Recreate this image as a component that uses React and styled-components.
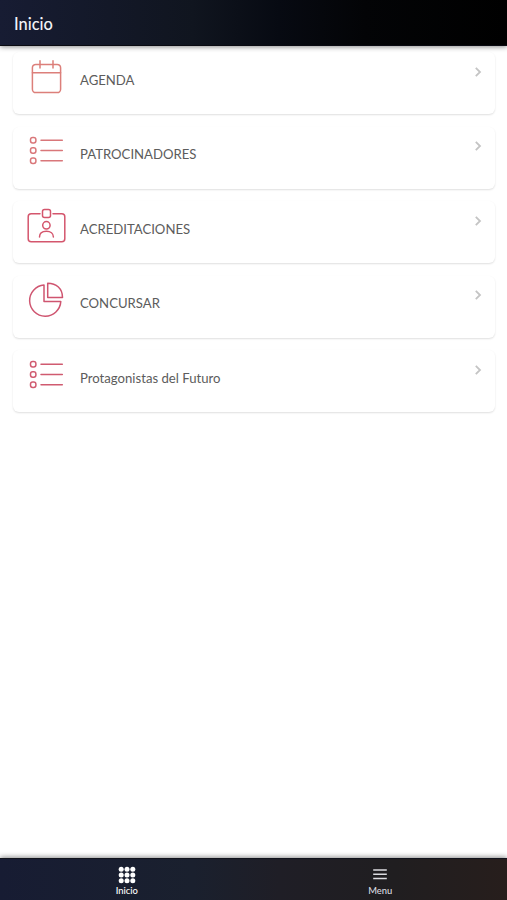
import React from 'react';
import styled, { createGlobalStyle } from 'styled-components';

const GlobalStyle = createGlobalStyle`
  * {
    box-sizing: border-box;
  }

  body {
    margin: 0;
    background: #fff;
    font-family: Lato, 'Liberation Sans', sans-serif;
  }
`;

const Page = styled.div`
  height: 900px;
  display: flex;
  flex-direction: column;
  overflow: hidden;
`;

const Header = styled.header`
  height: 46px;
  flex: none;
  display: flex;
  align-items: center;
  padding: 2px 14px 0;
  background: linear-gradient(90deg, #171c33 0%, #10151f 38%, #070a12 55%, #030406 72%, #000 100%);
  border-bottom: 1px solid #0a0b12;
  box-shadow: 0 1px 5px rgba(0, 0, 0, 0.45);
  z-index: 1;
`;

const Title = styled.h1`
  margin: 0;
  color: #f2f3f7;
  font-size: 16.4px;
  font-weight: 500;
  line-height: 20px;
`;

const Content = styled.main`
  flex: 1;
  display: flex;
  flex-direction: column;
  gap: 12.5px;
  padding: 6px 12px 0 13px;
`;

const Card = styled.button`
  height: 62px;
  flex: none;
  display: flex;
  align-items: flex-start;
  padding: 4.5px 10px 0 13px;
  border: none;
  border-radius: 6px;
  background: #fff;
  box-shadow: 0 1px 2px rgba(0, 0, 0, 0.13);
  font-family: inherit;
  text-align: left;
  cursor: pointer;
`;

const IconBox = styled.svg`
  width: 40px;
  height: 40px;
  flex: none;
  fill: none;
  stroke: ${props => props.$color};
  stroke-width: 1.5;
  stroke-linecap: round;
  stroke-linejoin: round;
`;

const Label = styled.span`
  flex: 1;
  padding: 13px 0 0 14px;
  color: #5c5c5c;
  font-size: 13.15px;
  line-height: 20px;
`;

const Chevron = styled.svg`
  width: 14px;
  height: 14px;
  margin-top: 8px;
  fill: none;
  stroke: #c4c4c4;
  stroke-width: 1.8;
`;

const TabBar = styled.nav`
  height: 42px;
  flex: none;
  display: flex;
  background: linear-gradient(90deg, #171c33 0%, #1a202e 38%, #1f1e26 55%, #201e20 78%, #271e1c 100%);
  border-top: 1px solid #11131c;
  box-shadow: 0 -1px 5px rgba(0, 0, 0, 0.45);
`;

const Tab = styled.button`
  flex: 1;
  display: flex;
  flex-direction: column;
  align-items: center;
  padding: 7px 0 0;
  border: none;
  background: none;
  color: ${props => (props.$active ? '#fff' : '#dcdce0')};
  font-family: inherit;
  font-size: 9.4px;
  font-weight: 500;
  line-height: 12px;
  cursor: pointer;

  svg {
    width: 18px;
    height: 18px;
    margin-bottom: 1px;
  }
`;

const CalendarIcon = () => (
  <>
    <rect x="6.4" y="7.4" width="28.2" height="28.2" rx="3.4" />
    <path d="M6.4 15.7h28.2M14 3.8v7.2M27 3.8v7.2" />
  </>
);

const ListIcon = () => (
  <>
    {[9.2, 19.5, 29.8].map(y => (
      <g key={y}>
        <rect x="4.5" y={y - 2.7} width="5.4" height="5.4" rx="2.2" />
        <path d={`M15 ${y}h21.3`} />
      </g>
    ))}
  </>
);

const BadgeIcon = () => (
  <>
    <path d="M14 7.7H5.2a3 3 0 0 0-3 3v22a3 3 0 0 0 3 3h30.6a3 3 0 0 0 3-3v-22a3 3 0 0 0-3-3H27" />
    <rect x="16.5" y="3.6" width="8" height="7.8" rx="2" />
    <circle cx="20.4" cy="19.3" r="3.7" />
    <path d="M13.5 31c0-3.6 2.8-5.8 6.9-5.8s7 2.2 7 5.8" />
  </>
);

const PieIcon = () => (
  <>
    <path d="M18 5a15.6 15.6 0 1 0 16.8 16.4H18z" />
    <path d="M21.7 3.2v14.2h14.8C36.5 8.6 30.4 3.2 21.7 3.2z" />
  </>
);

const items = [
  { label: 'AGENDA', icon: CalendarIcon, color: '#dc7f7a' },
  { label: 'PATROCINADORES', icon: ListIcon, color: '#d9777a' },
  { label: 'ACREDITACIONES', icon: BadgeIcon, color: '#d4566d' },
  { label: 'CONCURSAR', icon: PieIcon, color: '#cf5570' },
  { label: 'Protagonistas del Futuro', icon: ListIcon, color: '#d05b70' },
];

const App = () => (
  <>
    <GlobalStyle />
    <Page>
      <Header>
        <Title>Inicio</Title>
      </Header>

      <Content>
        {items.map(({ label, icon: Icon, color }) => (
          <Card key={label}>
            <IconBox viewBox="0 0 40 40" $color={color}>
              <Icon />
            </IconBox>
            <Label>{label}</Label>
            <Chevron viewBox="0 0 14 14">
              <path d="M4.8 2.8L9 7l-4.2 4.2" />
            </Chevron>
          </Card>
        ))}
      </Content>

      <TabBar>
        <Tab $active>
          <svg viewBox="0 0 18 18" fill="currentColor">
            {[3.2, 9, 14.8].map(y =>
              [3.2, 9, 14.8].map(x => <circle key={`${x}-${y}`} cx={x} cy={y} r="2.5" />)
            )}
          </svg>
          Inicio
        </Tab>
        <Tab>
          <svg viewBox="0 0 18 18" fill="none" stroke="currentColor" strokeWidth="1.5">
            <path d="M2.2 4h13.6M2.2 8.2h13.6M2.2 12.4h13.6" />
          </svg>
          Menu
        </Tab>
      </TabBar>
    </Page>
  </>
);

export default App;
